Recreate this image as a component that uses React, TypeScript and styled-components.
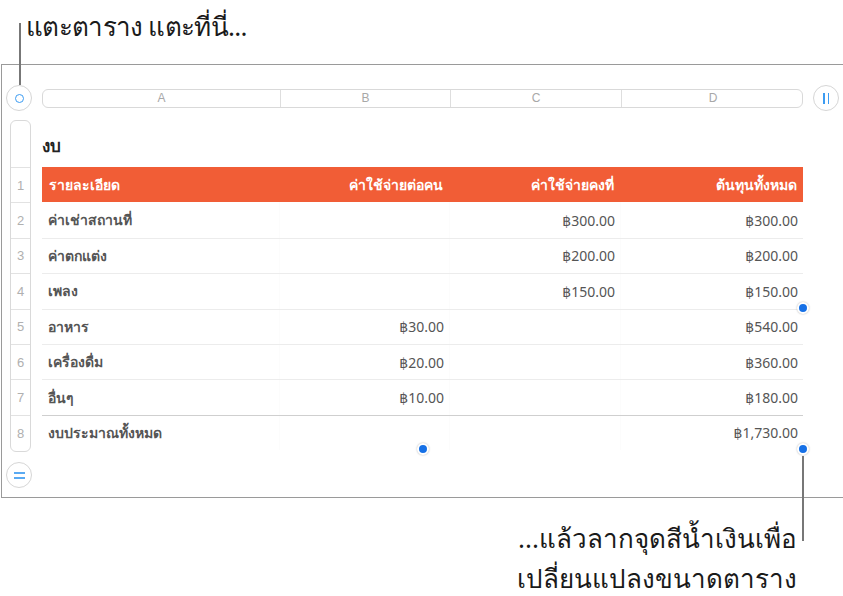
import styled, { createGlobalStyle } from 'styled-components';

interface BudgetRow {
  label: string;
  perPerson?: string;
  fixed?: string;
  total: string;
}

const rows: BudgetRow[] = [
  { label: 'ค่าเช่าสถานที่', fixed: '฿300.00', total: '฿300.00' },
  { label: 'ค่าตกแต่ง', fixed: '฿200.00', total: '฿200.00' },
  { label: 'เพลง', fixed: '฿150.00', total: '฿150.00' },
  { label: 'อาหาร', perPerson: '฿30.00', total: '฿540.00' },
  { label: 'เครื่องดื่ม', perPerson: '฿20.00', total: '฿360.00' },
  { label: 'อื่นๆ', perPerson: '฿10.00', total: '฿180.00' },
  { label: 'งบประมาณทั้งหมด', total: '฿1,730.00' },
];

const columns = ['A', 'B', 'C', 'D'];
const widths = [237, 170, 171, 183];
const ROW_H = 35.4;

export default function App(): JSX.Element {
  return (
    <>
      <GlobalStyle />
      <Page>
        <TopCaption>แตะตาราง แตะที่นี่...</TopCaption>
        <Frame>
          <Toolbar>
            <RoundButton>
              <RingIcon />
              <Leader />
            </RoundButton>
            <ColumnBar>
              {columns.map((c, i) => (
                <ColumnCell key={c} style={{ width: widths[i] }}>
                  {c}
                </ColumnCell>
              ))}
            </ColumnBar>
            <RoundButton>
              <PauseIcon>
                <span />
                <span />
              </PauseIcon>
            </RoundButton>
          </Toolbar>
          <Body>
            <Rail>
              <RowHeaderBar>
                <RowHeaderTop />
                {Array.from({ length: 8 }, (_, i) => (
                  <RowNumber key={i} last={i === 7}>
                    {i + 1}
                  </RowNumber>
                ))}
              </RowHeaderBar>
              <RoundButton>
                <EqualIcon>
                  <span />
                  <span />
                </EqualIcon>
              </RoundButton>
            </Rail>
            <Sheet>
              <Title>งบ</Title>
              <Table>
                <HeaderRow>
                  <HeadCell style={{ width: widths[0] }} align="left">
                    รายละเอียด
                  </HeadCell>
                  <HeadCell style={{ width: widths[1] }}>ค่าใช้จ่ายต่อคน</HeadCell>
                  <HeadCell style={{ width: widths[2] }}>ค่าใช้จ่ายคงที่</HeadCell>
                  <HeadCell style={{ width: widths[3] }}>ต้นทุนทั้งหมด</HeadCell>
                </HeaderRow>
                {rows.map((r, i) => (
                  <BodyRow key={r.label} footer={i === rows.length - 1}>
                    <Cell style={{ width: widths[0] }} align="left">
                      {r.label}
                    </Cell>
                    <Cell style={{ width: widths[1] }}>{r.perPerson}</Cell>
                    <Cell style={{ width: widths[2] }}>{r.fixed}</Cell>
                    <Cell style={{ width: widths[3] }}>{r.total}</Cell>
                  </BodyRow>
                ))}
                <Handle pos="right" />
                <Handle pos="bottom" />
                <Handle pos="corner">
                  <BottomLeader />
                </Handle>
              </Table>
            </Sheet>
          </Body>
        </Frame>
        <BottomCaption>
          ...แล้วลากจุดสีน้ำเงินเพื่อ
          <br />
          เปลี่ยนแปลงขนาดตาราง
        </BottomCaption>
      </Page>
    </>
  );
}

const GlobalStyle = createGlobalStyle`
  body {
    margin: 0;
    background: #fff;
    font-family: 'Noto Sans', 'DejaVu Sans', sans-serif;
  }
`;

const Page = styled.div`
  width: 843px;
  height: 596px;
  position: relative;
  overflow: hidden;
`;

const TopCaption = styled.div`
  height: 64px;
  padding: 6px 0 0 26px;
  box-sizing: border-box;
  font-size: 26px;
  letter-spacing: -0.7px;
  line-height: 40px;
  color: #1a1a1a;
`;

const Frame = styled.div`
  margin-left: 1px;
  width: 842px;
  height: 434px;
  box-sizing: border-box;
  border: 1px solid #9a9a9a;
  border-right: none;
`;

const Toolbar = styled.div`
  display: flex;
  align-items: center;
  gap: 10px;
  padding: 20px 0 0 4px;
`;

const RoundButton = styled.div`
  position: relative;
  width: 26px;
  height: 26px;
  flex: none;
  box-sizing: border-box;
  border: 1px solid #d6d6d6;
  border-radius: 50%;
  background: #fff;
  display: flex;
  align-items: center;
  justify-content: center;
`;

const RingIcon = styled.span`
  width: 9px;
  height: 9px;
  box-sizing: border-box;
  border: 1.5px solid #3c9cf2;
  border-radius: 50%;
`;

const PauseIcon = styled.span`
  display: flex;
  gap: 3px;
  span {
    width: 1.5px;
    height: 11px;
    background: #3c9cf2;
  }
`;

const EqualIcon = styled.span`
  display: flex;
  flex-direction: column;
  gap: 3px;
  span {
    width: 11px;
    height: 2px;
    background: #5aaaf2;
  }
`;

const Leader = styled.span`
  position: absolute;
  left: 12px;
  bottom: 25px;
  width: 2px;
  height: 62px;
  background: #777;
`;

const ColumnBar = styled.div`
  display: flex;
  width: 761px;
  height: 19px;
  box-sizing: border-box;
  border: 1px solid #d9d9d9;
  border-radius: 6px;
`;

const ColumnCell = styled.div`
  box-sizing: border-box;
  flex: none;
  border-left: 1px solid #dedede;
  font-family: 'Liberation Sans', sans-serif;
  font-size: 12px;
  line-height: 17px;
  color: #a8a8a8;
  text-align: center;
  &:first-child {
    border-left: none;
  }
`;

const Body = styled.div`
  display: flex;
  margin-top: 9px;
`;

const Rail = styled.div`
  width: 40px;
  flex: none;
  display: flex;
  flex-direction: column;
  gap: 10px;
  padding-left: 4px;
  box-sizing: border-box;
`;

const RowHeaderBar = styled.div`
  margin-left: 4px;
  width: 21px;
  box-sizing: border-box;
  border: 1px solid #d9d9d9;
  border-radius: 6px;
  overflow: hidden;
`;

const RowHeaderTop = styled.div`
  height: 46px;
  border-bottom: 1px solid #e2e2e2;
`;

const RowNumber = styled.div<{ last: boolean }>`
  height: ${ROW_H}px;
  box-sizing: border-box;
  border-bottom: ${({ last }) => (last ? 'none' : '1px solid #e2e2e2')};
  display: flex;
  align-items: center;
  justify-content: center;
  font-family: 'Liberation Sans', sans-serif;
  font-size: 13px;
  color: #b0b0b0;
`;

const Sheet = styled.div`
  display: flex;
  flex-direction: column;
`;

const Title = styled.div`
  height: 47px;
  display: flex;
  align-items: center;
  font-size: 17px;
  font-weight: 700;
  color: #222;
  padding-top: 4px;
  box-sizing: border-box;
`;

const Table = styled.div`
  position: relative;
  width: 761px;
`;

const HeaderRow = styled.div`
  display: flex;
  height: ${ROW_H}px;
  background: #f15d36;
`;

const HeadCell = styled.div<{ align?: string }>`
  flex: none;
  box-sizing: border-box;
  padding: 0 6px 0 7px;
  display: flex;
  align-items: center;
  justify-content: ${({ align }) => (align === 'left' ? 'flex-start' : 'flex-end')};
  color: #fff;
  font-size: 14px;
  font-weight: 700;
`;

const BodyRow = styled.div<{ footer: boolean }>`
  display: flex;
  height: ${ROW_H}px;
  border-top: 1px solid ${({ footer }) => (footer ? '#cfcfcf' : '#ececec')};
  box-sizing: border-box;
  &:nth-child(2) {
    border-top: none;
  }
`;

const Cell = styled.div<{ align?: string }>`
  flex: none;
  box-sizing: border-box;
  padding: 0 5px 0 6px;
  display: flex;
  align-items: center;
  justify-content: ${({ align }) => (align === 'left' ? 'flex-start' : 'flex-end')};
  border-left: 1px solid #fcfcfc;
  color: #555;
  font-size: 14px;
  font-weight: ${({ align }) => (align === 'left' ? 600 : 400)};
  &:first-child {
    border-left: none;
  }
`;

const Handle = styled.div<{ pos: 'right' | 'bottom' | 'corner' }>`
  position: absolute;
  width: 12px;
  height: 12px;
  box-sizing: border-box;
  border: 2px solid #fff;
  border-radius: 50%;
  background: #1670e6;
  box-shadow: 0 0 2px rgba(0, 0, 0, 0.3);
  left: ${({ pos }) => (pos === 'bottom' ? '375px' : '755px')};
  top: ${({ pos }) => (pos === 'right' ? '135px' : '276px')};
`;

const BottomLeader = styled.span`
  position: absolute;
  left: 3px;
  top: 11px;
  width: 2px;
  height: 85px;
  background: #777;
`;

const BottomCaption = styled.div`
  width: 797px;
  padding-top: 20px;
  text-align: right;
  font-size: 26px;
  letter-spacing: 0;
  line-height: 40px;
  color: #1a1a1a;
`;
